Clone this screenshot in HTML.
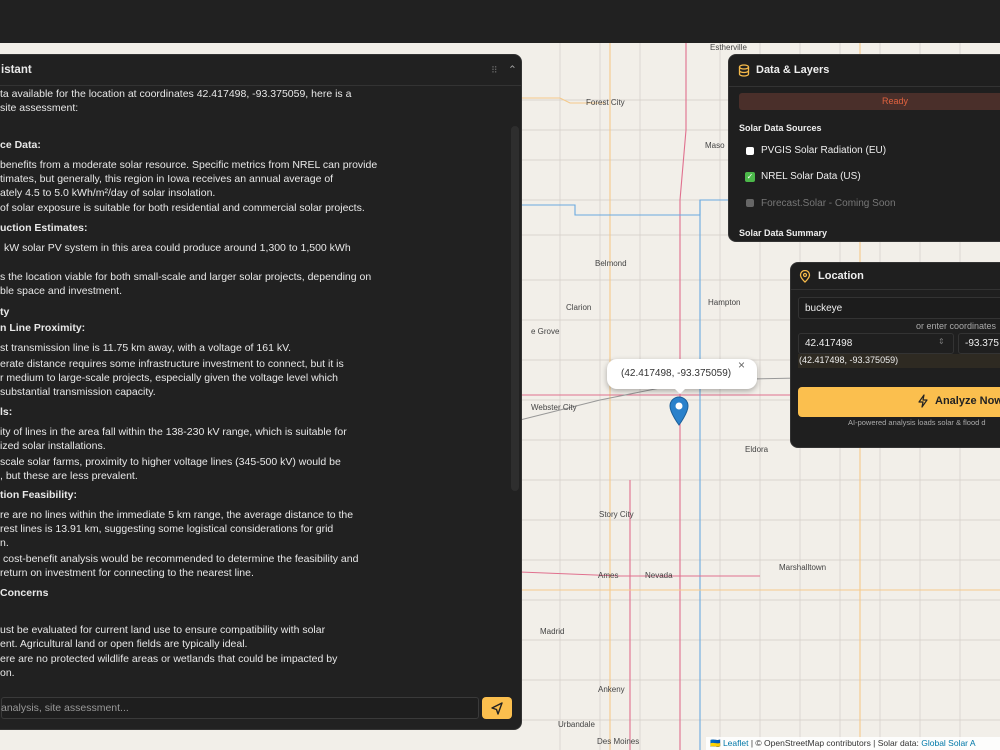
<!DOCTYPE html>
<html><head><meta charset="utf-8"><style>
*{margin:0;padding:0;box-sizing:border-box}
body{width:1000px;height:750px;overflow:hidden;position:relative;background:#f2efe9;font-family:"Liberation Sans",sans-serif}
.top{position:absolute;left:0;top:0;width:1000px;height:43px;background:#212121}
.chat{position:absolute;left:-10px;top:54px;width:532px;height:676px;background:#212121;border-radius:8px;border:1px solid #333}
.chat .hd{position:absolute;left:0;top:0;width:100%;height:31px;border-bottom:1px solid #333}
.t{position:absolute;color:#e8e8e8;font-size:10.5px;white-space:nowrap;line-height:14px}
.b{font-weight:bold}
.panel{position:absolute;background:#1f1f1f;border:1px solid #333;border-radius:8px;color:#eee}
.lbl{position:absolute;font-size:11px;white-space:nowrap}
.map{position:absolute;left:0;top:0}
.city{font-size:8px;fill:#444;font-family:"Liberation Sans",sans-serif}
</style></head><body>
<svg class="map" width="1000" height="750">
<g stroke="#d3cec8" stroke-width="0.7" fill="none">
<path d="M520 100H1000M520 130H1000M520 160H1000M520 200H1000M520 235H1000M520 280H1000M520 320H1000M520 360H1000M520 400H1000M520 440H1000M520 480H1000M520 520H1000M520 560H1000M520 600H1000M520 640H1000M520 680H1000M520 720H1000"/>
<path d="M560 43V750M600 43V750M640 43V750M720 43V750M760 43V750M800 43V750M840 43V750M880 43V750M920 43V750M960 43V750"/>
</g>
<g fill="none" stroke-width="1.1">
<path d="M520 98H560L570 103H605" stroke="#f5c98a"/>
<path d="M610 43V750" stroke="#f5c98a"/>
<path d="M686 43V130L680 200V750" stroke="#e0708e"/>
<path d="M520 395H1000" stroke="#e0708e"/>
<path d="M520 205H575V215H700V200H1000" stroke="#6aaae0"/>
<path d="M700 200V750" stroke="#6aaae0"/>
<path d="M520 420L600 400L700 380L800 378" stroke="#999"/>
<path d="M630 480V750" stroke="#e0708e"/>
<path d="M520 572L620 576H760" stroke="#e0708e"/>
<path d="M520 590H1000" stroke="#f5c98a"/>
<path d="M860 43V750" stroke="#f5c98a"/>
</g>
<g class="city"><text x="586" y="105">Forest City</text><text x="595" y="266">Belmond</text><text x="566" y="310">Clarion</text><text x="708" y="305">Hampton</text><text x="531" y="410">Webster City</text><text x="745" y="452">Eldora</text><text x="599" y="517">Story City</text><text x="598" y="578">Ames</text><text x="645" y="578">Nevada</text><text x="779" y="570">Marshalltown</text><text x="558" y="727">Urbandale</text><text x="597" y="744">Des Moines</text><text x="598" y="692">Ankeny</text><text x="540" y="634">Madrid</text><text x="705" y="148">Maso</text><text x="710" y="50">Estherville</text><text x="531" y="334">e Grove</text></g>
</svg>
<div class="top"></div>

<div class="chat">
<div class="hd"><span class="t b" style="left:10px;top:8px;font-size:11.5px">istant</span><span class="t" style="left:500px;top:8px;color:#666;font-size:9px">⠿</span><span class="t" style="left:517px;top:8px;color:#aaa">⌃</span></div>
<div style="position:absolute;left:520px;top:71px;width:8px;height:365px;background:#2e2e2e;border-radius:4px"></div>
<div style="position:absolute;left:10px;top:642px;width:478px;height:22px;border:1px solid #3a3a3a;background:#1e1e1e;border-radius:3px"></div>
<span class="t" style="left:10px;top:646px;color:#999">analysis, site assessment...</span>
<div style="position:absolute;left:491px;top:642px;width:30px;height:22px;background:#fbbf4e;border-radius:4px"><svg width="30" height="22"><path d="M10 11L20 6L16 17L14.5 12.5Z" fill="none" stroke="#222" stroke-width="1.4" stroke-linejoin="round"/></svg></div>
</div>

<span class="t" style="left:0;top:87px">ta available for the location at coordinates 42.417498, -93.375059, here is a</span>
<span class="t" style="left:0;top:101px">site assessment:</span>
<span class="t b" style="left:0;top:138px">ce Data:</span>
<span class="t" style="left:0;top:158px">benefits from a moderate solar resource. Specific metrics from NREL can provide</span>
<span class="t" style="left:0;top:172px">timates, but generally, this region in Iowa receives an annual average of</span>
<span class="t" style="left:0;top:186px">ately 4.5 to 5.0 kWh/m²/day of solar insolation.</span>
<span class="t" style="left:0;top:201px">of solar exposure is suitable for both residential and commercial solar projects.</span>
<span class="t b" style="left:0;top:221px">uction Estimates:</span>
<span class="t" style="left:4px;top:241px">kW solar PV system in this area could produce around 1,300 to 1,500 kWh</span>
<span class="t" style="left:0;top:270px">s the location viable for both small-scale and larger solar projects, depending on</span>
<span class="t" style="left:0;top:284px">ble space and investment.</span>
<span class="t b" style="left:0;top:305px">ty</span>
<span class="t b" style="left:0;top:321px">n Line Proximity:</span>
<span class="t" style="left:0;top:341px">st transmission line is 11.75 km away, with a voltage of 161 kV.</span>
<span class="t" style="left:0;top:357px">erate distance requires some infrastructure investment to connect, but it is</span>
<span class="t" style="left:0;top:371px">r medium to large-scale projects, especially given the voltage level which</span>
<span class="t" style="left:0;top:385px">substantial transmission capacity.</span>
<span class="t b" style="left:0;top:405px">ls:</span>
<span class="t" style="left:0;top:425px">ity of lines in the area fall within the 138-230 kV range, which is suitable for</span>
<span class="t" style="left:0;top:439px">ized solar installations.</span>
<span class="t" style="left:0;top:455px">scale solar farms, proximity to higher voltage lines (345-500 kV) would be</span>
<span class="t" style="left:0;top:469px">, but these are less prevalent.</span>
<span class="t b" style="left:0;top:488px">tion Feasibility:</span>
<span class="t" style="left:0;top:508px">re are no lines within the immediate 5 km range, the average distance to the</span>
<span class="t" style="left:0;top:522px">rest lines is 13.91 km, suggesting some logistical considerations for grid</span>
<span class="t" style="left:0;top:536px">n.</span>
<span class="t" style="left:3px;top:552px">cost-benefit analysis would be recommended to determine the feasibility and</span>
<span class="t" style="left:0;top:566px">return on investment for connecting to the nearest line.</span>
<span class="t b" style="left:0;top:586px">Concerns</span>
<span class="t" style="left:0;top:623px">ust be evaluated for current land use to ensure compatibility with solar</span>
<span class="t" style="left:0;top:637px">ent. Agricultural land or open fields are typically ideal.</span>
<span class="t" style="left:0;top:652px">ere are no protected wildlife areas or wetlands that could be impacted by</span>
<span class="t" style="left:0;top:666px">on.</span>

<div style="position:absolute;left:607px;top:359px;width:150px;height:30px;background:#fff;border-radius:10px;box-shadow:0 2px 6px rgba(0,0,0,.3)"></div>
<div style="position:absolute;left:672px;top:386px;width:0;height:0;border-left:8px solid transparent;border-right:8px solid transparent;border-top:8px solid #fff"></div>
<span class="t" style="left:621px;top:367px;color:#333;font-size:10px">(42.417498, -93.375059)</span>
<span class="t" style="left:738px;top:358px;color:#666;font-size:12px">×</span>
<svg style="position:absolute;left:669px;top:396px" width="20" height="30"><path d="M10 29C10 29 1 17 1 10A9 9 0 0 1 19 10C19 17 10 29 10 29Z" fill="#2a81cb" stroke="#1b5f99"/><circle cx="10" cy="10" r="3.5" fill="#fff"/></svg>

<div class="panel" style="left:728px;top:54px;width:290px;height:188px">
<svg style="position:absolute;left:9px;top:9px" width="12" height="13"><ellipse cx="6" cy="3" rx="4.5" ry="2" fill="none" stroke="#f5b94a" stroke-width="1.3"/><path d="M1.5 3V10C1.5 11.2 3.5 12 6 12S10.5 11.2 10.5 10V3M1.5 6.5C1.5 7.7 3.5 8.5 6 8.5S10.5 7.7 10.5 6.5" fill="none" stroke="#f5b94a" stroke-width="1.3"/></svg>
<span class="lbl b" style="left:27px;top:9px;font-size:11px">Data &amp; Layers</span>
<div style="position:absolute;left:0;top:31px;width:100%;border-top:1px solid #333"></div>
<div style="position:absolute;left:10px;top:38px;width:275px;height:17px;background:#4a2f2a;border-radius:3px"></div>
<span class="lbl" style="left:153px;top:41px;font-size:9px;color:#e0623f">Ready</span>
<span class="lbl b" style="left:10px;top:68px;font-size:9px">Solar Data Sources</span>
<div style="position:absolute;left:17px;top:92px;width:8px;height:8px;background:#fff;border-radius:2px"></div>
<span class="lbl" style="left:32px;top:90px;font-size:10px">PVGIS Solar Radiation (EU)</span>
<div style="position:absolute;left:16px;top:117px;width:10px;height:10px;background:#4cb84a;border-radius:2px;color:#fff;font-size:8px;line-height:10px;text-align:center">✓</div>
<span class="lbl" style="left:32px;top:116px;font-size:10px">NREL Solar Data (US)</span>
<div style="position:absolute;left:17px;top:144px;width:8px;height:8px;background:#666;border-radius:2px"></div>
<span class="lbl" style="left:32px;top:143px;font-size:10px;color:#777">Forecast.Solar - Coming Soon</span>
<span class="lbl b" style="left:10px;top:173px;font-size:9px">Solar Data Summary</span>
</div>

<div class="panel" style="left:790px;top:262px;width:230px;height:186px">
<svg style="position:absolute;left:8px;top:7px" width="12" height="13"><path d="M6 12C6 12 1.5 8 1.5 5A4.5 4.5 0 0 1 10.5 5C10.5 8 6 12 6 12Z" fill="none" stroke="#f5b94a" stroke-width="1.3"/><circle cx="6" cy="5" r="1.5" fill="none" stroke="#f5b94a" stroke-width="1.2"/></svg>
<span class="lbl b" style="left:27px;top:7px;font-size:11px">Location</span>
<div style="position:absolute;left:0;top:26px;width:100%;border-top:1px solid #333"></div>
<div style="position:absolute;left:7px;top:34px;width:230px;height:22px;border:1px solid #333;border-radius:3px;background:#1c1c1c"></div>
<span class="lbl" style="left:14px;top:40px;font-size:10px">buckeye</span>
<span class="lbl" style="left:125px;top:58px;font-size:9px;color:#aaa">or enter coordinates</span>
<div style="position:absolute;left:7px;top:70px;width:156px;height:21px;border:1px solid #333;border-radius:3px"></div>
<span class="lbl" style="left:14px;top:75px;font-size:10px">42.417498</span>
<span class="lbl" style="left:147px;top:74px;font-size:8px;color:#777">⇕</span>
<div style="position:absolute;left:167px;top:70px;width:70px;height:21px;border:1px solid #333;border-radius:3px"></div>
<span class="lbl" style="left:174px;top:75px;font-size:10px">-93.375</span>
<div style="position:absolute;left:7px;top:91px;width:230px;height:14px;background:#2e2a22"></div>
<span class="lbl" style="left:8px;top:92px;font-size:9px">(42.417498, -93.375059)</span>
<div style="position:absolute;left:7px;top:124px;width:230px;height:30px;background:#fbbf4e;border-radius:4px"></div>
<svg style="position:absolute;left:126px;top:131px" width="12" height="14"><path d="M7 1L2 8H6L5 13L10 6H6Z" fill="none" stroke="#222" stroke-width="1.2" stroke-linejoin="round"/></svg>
<span class="lbl b" style="left:144px;top:132px;font-size:11px;color:#222">Analyze Now</span>
<span class="lbl" style="left:57px;top:155px;font-size:7.5px;color:#aaa">AI-powered analysis loads solar &amp; flood d</span>
</div>

<div style="position:absolute;left:706px;top:737px;width:294px;height:13px;background:rgba(255,255,255,.85);font-size:8.5px;color:#333;padding:1px 4px;white-space:nowrap">🇺🇦 <span style="color:#0078a8">Leaflet</span> | © OpenStreetMap contributors | Solar data: <span style="color:#0078a8">Global Solar A</span></div>
</body></html>
